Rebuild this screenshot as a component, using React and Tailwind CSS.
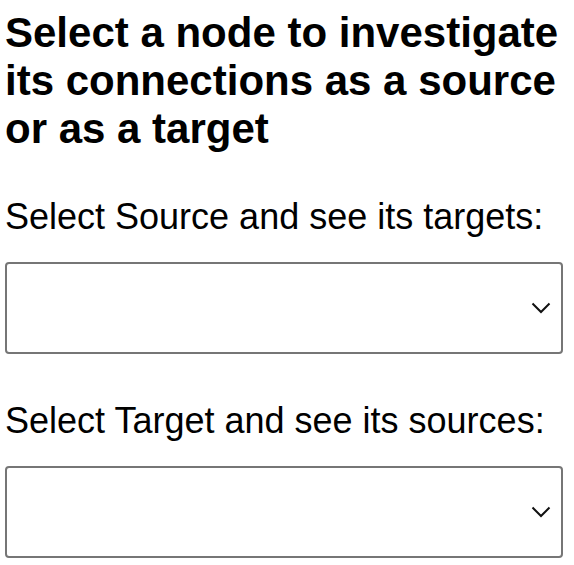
import { useState } from 'react';

function Chevron() {
  return (
    <svg className="pointer-events-none absolute right-[12px] top-1/2 -translate-y-1/2" width="20" height="12" viewBox="0 0 20 12" fill="none">
      <path d="M1.5 1.5L10 10L18.5 1.5" stroke="#111" strokeWidth="2" />
    </svg>
  );
}

function NodeSelect({ label, value, onChange, className }) {
  return (
    <div className={`flex flex-col ${className}`}>
      <label className="text-[36px] leading-[40px] text-black">{label}</label>
      <div className="relative mt-[25px]">
        <select
          value={value}
          onChange={(e) => onChange(e.target.value)}
          className="block h-[92px] w-full appearance-none rounded-[4px] border-2 border-[#767676] bg-white"
        >
          <option value=""></option>
        </select>
        <Chevron />
      </div>
    </div>
  );
}

export default function App() {
  const [source, setSource] = useState('');
  const [target, setTarget] = useState('');

  return (
    <div className="min-h-screen bg-white pl-[5px] pr-[11px] pt-[9px] font-['Liberation_Sans',Arial,sans-serif] text-black">
      <h2 className="text-[42px] font-bold leading-[48px]">
        Select a node to investigate its connections as a source or as a target
      </h2>
      <NodeSelect className="mt-[44px]" label="Select Source and see its targets:" value={source} onChange={setSource} />
      <NodeSelect className="mt-[47px]" label="Select Target and see its sources:" value={target} onChange={setTarget} />
    </div>
  );
}
